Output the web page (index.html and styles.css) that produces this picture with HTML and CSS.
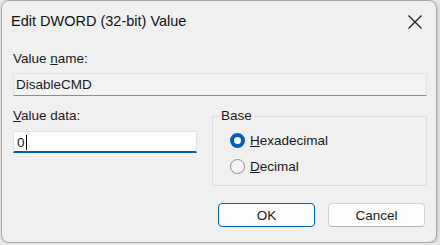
FILE: index.html
```html
<!DOCTYPE html>
<html lang="en">
<head>
  <meta charset="UTF-8">
  <title>Edit DWORD (32-bit) Value</title>
  <link rel="stylesheet" href="styles.css">
</head>
<body>
  <div class="dialog">
    <!-- Заголовок окна -->
    <div class="titlebar">
      <span class="title">Edit DWORD (32-bit) Value</span>
      <span class="close">
        <svg width="16" height="16" viewBox="0 0 16 16">
          <path d="M1.5 1.5 L14.5 14.5 M14.5 1.5 L1.5 14.5" stroke="#1b1b1b" stroke-width="1.2" fill="none"/>
        </svg>
      </span>
    </div>

    <div class="content">
      <div class="label">Value <u>n</u>ame:</div>
      <div class="field readonly">DisableCMD</div>

      <div class="row">
        <div class="data-col">
          <div class="label"><u>V</u>alue data:</div>
          <div class="field edit">0<span class="caret"></span></div>
        </div>
        <fieldset class="base">
          <legend>Base</legend>
          <div class="radio checked"><span class="dot"></span><span><u>H</u>exadecimal</span></div>
          <div class="radio"><span class="dot"></span><span><u>D</u>ecimal</span></div>
        </fieldset>
      </div>

      <div class="buttons">
        <button class="btn default">OK</button>
        <button class="btn">Cancel</button>
      </div>
    </div>
  </div>
</body>
</html>
```

FILE: styles.css
```css
html, body {
  margin: 0;
  padding: 0;
  background: #e6e6e6;
  font-family: "Liberation Sans", Arial, sans-serif;
  color: #1a1a1a;
}
/* Окно диалога */
.dialog {
  margin-left: 1px;
  width: 434px;
  height: 241px;
  background: #f0f0f0;
  border: 1px solid #a8a8a8;
  border-radius: 8px;
  box-shadow: 1px 1px 3px rgba(0, 0, 0, 0.15);
}
.titlebar {
  height: 40px;
  display: flex;
  align-items: center;
  justify-content: space-between;
  padding: 0 13px 0 9px;
}
.title {
  font-size: 14.5px;
  color: #111;
}
.close {
  display: flex;
  margin-top: 1px;
}
.content {
  padding: 10px 9px 0 11px;
  font-size: 13.5px;
}
.label {
  height: 16px;
  line-height: 16px;
}
.field {
  box-sizing: border-box;
  height: 23px;
  line-height: 21px;
  padding-left: 2px;
  margin-top: 6px;
  border: 1px solid #e2e2e2;
}
.readonly {
  background: #f3f3f3;
  border-bottom-color: #8c8c8c;
}
.edit {
  width: 184px;
  height: 22px;
  margin-top: 7px;
  background: #fff;
  border-bottom: 2px solid #005fb8;
  padding-left: 3px;
}
.caret {
  display: inline-block;
  width: 1px;
  height: 15px;
  background: #000;
  vertical-align: -3px;
  margin-left: 1px;
}
.row {
  display: flex;
  justify-content: space-between;
  margin-top: 12px;
}
/* Группа "Base" */
.base {
  box-sizing: border-box;
  width: 215px;
  height: 78px;
  margin: 0;
  padding: 3px 0 0 17px;
  border: 1px solid #dcdcdc;
}
.base legend {
  padding: 0 2px;
  margin-left: -11px;
  line-height: 16px;
}
.radio {
  display: flex;
  align-items: center;
  gap: 5px;
  height: 26px;
}
.dot {
  box-sizing: border-box;
  width: 15px;
  height: 15px;
  border-radius: 50%;
  border: 1px solid #8a8a8a;
  background: #f6f6f6;
}
.checked .dot {
  border: 4.5px solid #005fb8;
  background: #fff;
}
.buttons {
  display: flex;
  justify-content: flex-end;
  gap: 13px;
  margin-top: 17px;
  padding-right: 2px;
}
.btn {
  box-sizing: border-box;
  width: 97px;
  height: 24px;
  font: inherit;
  font-size: 13.5px;
  color: #1a1a1a;
  background: #fdfdfd;
  border: 1px solid #d4d4d4;
  border-bottom-color: #b4b4b4;
  border-radius: 4px;
}
.btn.default {
  border-color: #005fb8;
}
```
